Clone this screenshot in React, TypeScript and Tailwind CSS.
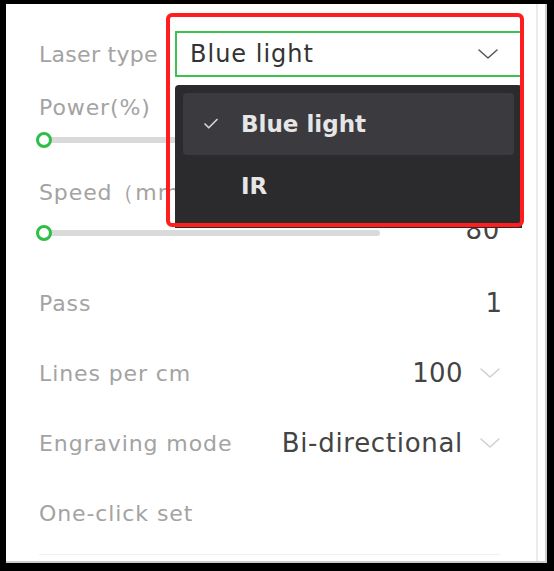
import React from 'react';
import { Check } from 'lucide-react';

const font = { fontFamily: '"DejaVu Sans", "Noto Sans", sans-serif' };

const Chevron = ({ className }: { className?: string }) => (
  <svg width="20" height="10" viewBox="0 0 20 10" fill="none" className={className}>
    <polyline points="1,1 10,9 19,1" stroke="currentColor" strokeWidth="1.5" strokeLinecap="round" strokeLinejoin="round" />
  </svg>
);

const Slider = ({ value, max }: { value: number; max: number }) => {
  const pct = (value / max) * 100;
  return (
    <div className="relative ml-[5px] flex h-[16px] w-[336px] items-center">
      <div className="h-[6px] w-full rounded-full bg-[#dadada]" />
      <div
        className="absolute top-0 h-[16px] w-[16px] -translate-x-1/2 rounded-full border-[3px] border-[#2fbf45] bg-white"
        style={{ left: `${pct}%` }}
      />
    </div>
  );
};

const Row = ({ label, children }: { label: string; children?: React.ReactNode }) => (
  <div className="flex h-[70px] items-center justify-between">
    <span className="text-[22px] tracking-[0.9px] text-[#a3a3a3]">{label}</span>
    {children}
  </div>
);

export default function App() {
  return (
    <div className="min-h-screen bg-black pl-[6px] pt-[4px]" style={font}>
      <div className="relative h-[559px] w-[541px] overflow-hidden border-b-2 border-r-2 border-[#cdcdcd] bg-white">
        {/* scrollbar track */}
        <div className="absolute bottom-0 right-[7px] top-0 w-[2px] bg-[#ebebeb]" />

        <div className="pl-[33px] pr-[45px]">
          {/* laser type */}
          <div className="mt-[27px] flex h-[46px] items-center">
            <span className="w-[136px] shrink-0 whitespace-nowrap text-[22px] tracking-[0.3px] text-[#a3a3a3]">Laser type</span>
            <div className="-mr-[22px] flex h-[46px] flex-1 items-center justify-between border-2 border-[#3cc24f] pl-[13px] pr-[22px]">
              <span className="text-[24px] tracking-[1px] text-[#333]">Blue light</span>
              <Chevron className="text-[#555]" />
            </div>
          </div>

          <div className="mt-[17px] h-[28px] text-[22px] leading-[28px] tracking-[0.9px] text-[#a3a3a3]">Power(%)</div>
          <div className="mt-[10px]">
            <Slider value={0} max={100} />
          </div>

          <div className="mt-[31px] h-[28px] whitespace-nowrap text-[22px] leading-[28px] tracking-[0.9px] text-[#a3a3a3]">Speed（mm/s）</div>
          <div className="mt-[12px] flex h-[28px] items-center justify-between">
            <Slider value={0} max={100} />
            <span className="-mt-[6px] text-[26px] tracking-[0.7px] text-[#444]">80</span>
          </div>

          <div className="mt-[21px]">
            <Row label="Pass">
              <span className="mr-[-2px] text-[26px] text-[#444]">1</span>
            </Row>
            <Row label="Lines per cm">
              <div className="flex items-center gap-[17px]">
                <span className="text-[26px] tracking-[0.4px] text-[#444]">100</span>
                <Chevron className="text-[#cfcfcf]" />
              </div>
            </Row>
            <Row label="Engraving mode">
              <div className="flex items-center gap-[17px]">
                <span className="text-[26px] tracking-[0.7px] text-[#444]">Bi-directional</span>
                <Chevron className="text-[#cfcfcf]" />
              </div>
            </Row>
            <Row label="One-click set" />
          </div>
          <div className="mt-[6px] h-[1px] bg-[#f0f0f0]" />
        </div>

        {/* open menu */}
        <div className="absolute left-[169px] top-[81px] h-[143px] w-[347px] rounded-t-[4px] bg-[#2b2b2e] p-[8px]">
          <div className="flex h-[62px] items-center rounded-[4px] bg-[#3b3b3f] pl-[19px]">
            <Check size={18} strokeWidth={2.25} className="text-[#d4d4d4]" />
            <span className="ml-[21px] text-[23px] font-bold text-[#e6e6e6]">Blue light</span>
          </div>
          <div className="flex h-[62px] items-center pl-[58px]">
            <span className="text-[23px] font-bold text-[#e6e6e6]">IR</span>
          </div>
        </div>

        {/* highlight frame */}
        <div className="pointer-events-none absolute left-[160px] top-[9px] h-[214px] w-[358px] rounded-[6px] border-4 border-[#ff1d1d]" />
      </div>
    </div>
  );
}
